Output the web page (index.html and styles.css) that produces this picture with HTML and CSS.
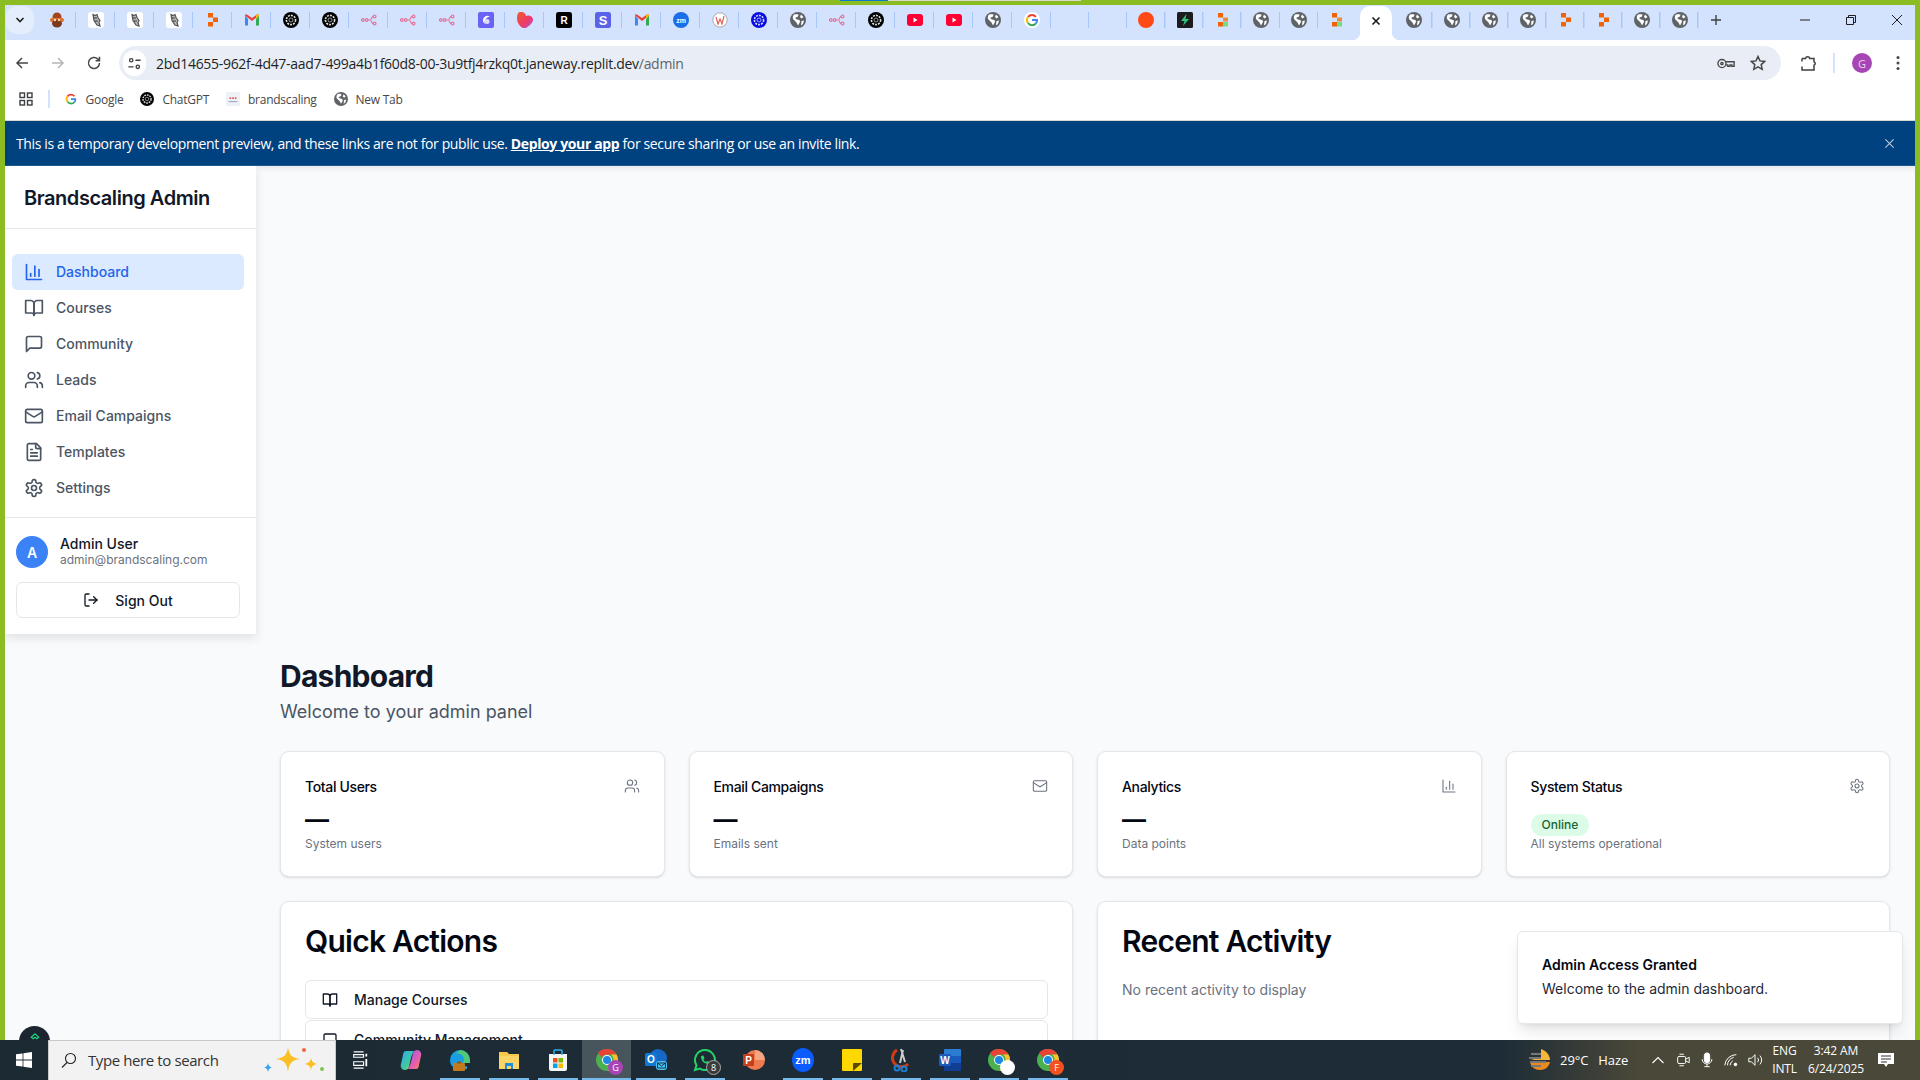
FILE: index.html
```html
<!DOCTYPE html>
<html lang="en">
<head>
  <meta charset="UTF-8">
  <title>Brandscaling Admin</title>
  <link rel="stylesheet" href="styles.css">
</head>
<body>
  <svg class="defs" aria-hidden="true">
    <!-- page icons -->
    <symbol id="i-chart" viewBox="0 0 24 24"><path d="M3 3v18h18"/><path d="M18 17V9"/><path d="M13 17V5"/><path d="M8 17v-3"/></symbol>
    <symbol id="i-book" viewBox="0 0 24 24"><path d="M2 3h6a4 4 0 0 1 4 4v14a3 3 0 0 0-3-3H2z"/><path d="M22 3h-6a4 4 0 0 0-4 4v14a3 3 0 0 1 3-3h7z"/></symbol>
    <symbol id="i-message" viewBox="0 0 24 24"><path d="M21 15a2 2 0 0 1-2 2H7l-4 4V5a2 2 0 0 1 2-2h14a2 2 0 0 1 2 2z"/></symbol>
    <symbol id="i-users" viewBox="0 0 24 24"><path d="M16 21v-2a4 4 0 0 0-4-4H6a4 4 0 0 0-4 4v2"/><circle cx="9" cy="7" r="4"/><path d="M22 21v-2a4 4 0 0 0-3-3.87"/><path d="M16 3.13a4 4 0 0 1 0 7.75"/></symbol>
    <symbol id="i-mail" viewBox="0 0 24 24"><rect width="20" height="16" x="2" y="4" rx="2"/><path d="m22 7-8.97 5.7a1.94 1.94 0 0 1-2.06 0L2 7"/></symbol>
    <symbol id="i-file" viewBox="0 0 24 24"><path d="M15 2H6a2 2 0 0 0-2 2v16a2 2 0 0 0 2 2h12a2 2 0 0 0 2-2V7Z"/><path d="M14 2v4a2 2 0 0 0 2 2h4"/><path d="M10 9H8"/><path d="M16 13H8"/><path d="M16 17H8"/></symbol>
    <symbol id="i-gear" viewBox="0 0 24 24"><path d="M12.22 2h-.44a2 2 0 0 0-2 2v.18a2 2 0 0 1-1 1.73l-.43.25a2 2 0 0 1-2 0l-.15-.08a2 2 0 0 0-2.73.73l-.22.38a2 2 0 0 0 .73 2.73l.15.1a2 2 0 0 1 1 1.72v.51a2 2 0 0 1-1 1.74l-.15.09a2 2 0 0 0-.73 2.73l.22.38a2 2 0 0 0 2.73.73l.15-.08a2 2 0 0 1 2 0l.43.25a2 2 0 0 1 1 1.73V20a2 2 0 0 0 2 2h.44a2 2 0 0 0 2-2v-.18a2 2 0 0 1 1-1.73l.43-.25a2 2 0 0 1 2 0l.15.08a2 2 0 0 0 2.73-.73l.22-.39a2 2 0 0 0-.73-2.73l-.15-.08a2 2 0 0 1-1-1.74v-.5a2 2 0 0 1 1-1.74l.15-.09a2 2 0 0 0 .73-2.73l-.22-.38a2 2 0 0 0-2.73-.73l-.15.08a2 2 0 0 1-2 0l-.43-.25a2 2 0 0 1-1-1.73V4a2 2 0 0 0-2-2z"/><circle cx="12" cy="12" r="3"/></symbol>
    <symbol id="i-logout" viewBox="0 0 24 24"><path d="M9 21H5a2 2 0 0 1-2-2V5a2 2 0 0 1 2-2h4"/><polyline points="16 17 21 12 16 7"/><line x1="21" x2="9" y1="12" y2="12"/></symbol>

    <!-- favicons -->
    <symbol id="f-monkey" viewBox="0 0 16 16"><circle cx="8" cy="5" r="4.5" fill="#a3461c"/><rect x="1" y="6" width="14" height="4" rx="2" fill="#e0702a"/><ellipse cx="8" cy="11.5" rx="5" ry="4" fill="#7a3a1c"/><circle cx="6" cy="8" r="1.2" fill="#f7d9a8"/><circle cx="10" cy="8" r="1.2" fill="#f7d9a8"/></symbol>
    <symbol id="f-coil" viewBox="0 0 16 16"><rect width="16" height="16" rx="3" fill="#fff"/><path d="M5 2.500l2 1 2-1 1 3 2 3-1 2 1 3.500-3-1-3-4.500z" fill="#bbb" stroke="#555" stroke-width="1.2"/><path d="M6 6h3M7 9h3" stroke="#333"/></symbol>
    <symbol id="f-replit" viewBox="0 0 16 16"><rect x="3" y="1" width="5" height="4.5" fill="#f26207"/><rect x="8" y="5.5" width="5" height="4.5" fill="#f26207"/><rect x="3" y="10" width="5" height="4.5" fill="#f26207"/></symbol>
    <symbol id="f-replit2" viewBox="0 0 16 16"><rect x="3" y="1" width="5" height="4.5" fill="#f26207"/><rect x="8" y="5.5" width="5" height="4" fill="#f08a3c"/><rect x="3" y="10" width="5" height="4.5" fill="#f26207"/><rect x="8" y="10" width="5" height="4.5" fill="#6fe07e"/></symbol>
    <symbol id="f-gmail" viewBox="0 0 16 16"><path d="M1 3.500v10h3V7z" fill="#4285f4"/><path d="M15 3.500v10h-3V7z" fill="#34a853"/><path d="M1 3.500 8 9l7-5.500V2.500l-2 0L8 6 3 2.500H1z" fill="#ea4335"/><path d="M12 7l3-3.500V2.500h-2L12 4z" fill="#fbbc04"/></symbol>
    <symbol id="f-openai" viewBox="0 0 16 16"><circle cx="8" cy="8" r="8" fill="#000"/><circle cx="8" cy="8" r="4.6" fill="none" stroke="#ddd" stroke-width="1.6" stroke-dasharray="2 1"/><circle cx="8" cy="8" r="2" fill="none" stroke="#999"/></symbol>
    <symbol id="f-openai-blue" viewBox="0 0 16 16"><circle cx="8" cy="8" r="8" fill="#0a0ae0"/><circle cx="8" cy="8" r="4.6" fill="none" stroke="#cfd8ff" stroke-width="1.6" stroke-dasharray="2 1"/><circle cx="8" cy="8" r="2" fill="none" stroke="#9fb0ff"/></symbol>
    <symbol id="f-nodes" viewBox="0 0 16 16"><g fill="none" stroke="#e0749c" stroke-width="1.2"><circle cx="1.8" cy="8" r="1.3"/><circle cx="5.6" cy="8" r="1.3"/><circle cx="13.6" cy="4.4" r="1.4"/><circle cx="13.6" cy="11.6" r="1.4"/><path d="M7 8h2.500M9.500 8c1 0 .8-3.600 2.800-3.600M9.500 8c1 0 .8 3.600 2.800 3.600"/></g></symbol>
    <symbol id="f-purple" viewBox="0 0 16 16"><rect width="16" height="16" rx="2" fill="#6a62f5"/><path d="M12 4.500a4.500 4.500 0 0 0-7 3.500 4 4 0 0 0 2 4c-1-3 1-7 5-7.500z" fill="#fff"/><circle cx="9" cy="9.500" r="2.500" fill="#dcdaff"/></symbol>
    <symbol id="f-heart" viewBox="0 0 16 16"><defs><linearGradient id="hg" x1="0" y1="0" x2="1" y2="1"><stop offset="0" stop-color="#f05a28"/><stop offset=".6" stop-color="#ee3a6a"/><stop offset="1" stop-color="#a05ce8"/></linearGradient></defs><path d="M3 0h2a5 5 0 0 1 4 4c1-1 7-1 7 4 0 3-4 6-7 8H6C2 14 0 10 0 6c0-3 1-6 3-6z" fill="url(#hg)"/></symbol>
    <symbol id="f-w" viewBox="0 0 16 16"><circle cx="8" cy="8" r="7.2" fill="#fff" stroke="#aaa"/><path d="M4 5l2 7 2-5 2 5 2-8" fill="none" stroke="#e05a4f" stroke-width="1.1"/></symbol>
    <symbol id="f-globe" viewBox="0 0 16 16"><circle cx="8" cy="8" r="8" fill="#5f6368"/><path d="M4 2.500c1.500-.5 3-.5 4.500 0l-.5 2-3 1.500 2 1.500 2.500.500.500 2-2 3.500-1.500-3-3.500-3.500C2.500 5 3 3.500 4 2.500zM11 2.500l2.500 2.500-2 1.500-1.500-1.500zM11.500 9l2.500-.5-1 3.500-2 1.500z" fill="#fff"/></symbol>
    <symbol id="f-yt" viewBox="0 0 16 16"><rect y="2" width="16" height="12" rx="3" fill="#ff0033"/><path d="M6.500 5.500v5l4-2.500z" fill="#fff"/></symbol>
    <symbol id="f-g" viewBox="0 0 16 16"><circle cx="8" cy="8" r="8" fill="#fff"/><g fill="none" stroke-width="2"><path d="M11.900 4.900A5 5 0 0 0 4 5" stroke="#ea4335"/><path d="M4 5a5 5 0 0 0 0 6" stroke="#fbbc04"/><path d="M4 11a5 5 0 0 0 8 0.400" stroke="#34a853"/><path d="M12 11.400A5 5 0 0 0 13 8H8" stroke="#4285f4"/></g></symbol>
    <symbol id="f-dot" viewBox="0 0 16 16"><circle cx="8" cy="8" r="8" fill="#ff4a17"/></symbol>
    <symbol id="f-bolt" viewBox="0 0 16 16"><rect width="16" height="16" rx="1.500" fill="#1c1c1c"/><path d="M9.500 2 4 9h3.500L6 14l6-7H8.500z" fill="#35c27d"/></symbol>
    <symbol id="a-chrome" viewBox="0 0 24 24"><circle cx="12" cy="12" r="11" fill="#4caf50"/><path d="M12 1a11 11 0 0 1 9.500 5.500H12a5.500 5.500 0 0 0-5 3L3 5a11 11 0 0 1 9-4z" fill="#ea4335"/><path d="M21.500 6.500A11 11 0 0 1 13 23l4-8a5.500 5.500 0 0 0-1-8.500z" fill="#fbc02d"/><circle cx="12" cy="12" r="5" fill="#fff"/><circle cx="12" cy="12" r="4" fill="#1e88e5"/></symbol>
  </svg>

  <div class="window">
    <div class="load-line"><span class="load-blue"></span><span class="load-grey"></span></div>

    <div class="tabstrip">
      <button class="tab-search"><svg viewBox="0 0 12 12" class="caret"><path d="M2.500 4 6 7.500 9.500 4"/></svg></button>
      <div class="tabs">
        <span class="tab"><svg class="fav"><use href="#f-monkey"/></svg></span>
        <span class="tab"><svg class="fav"><use href="#f-coil"/></svg></span>
        <span class="tab"><svg class="fav"><use href="#f-coil"/></svg></span>
        <span class="tab"><svg class="fav"><use href="#f-coil"/></svg></span>
        <span class="tab"><svg class="fav"><use href="#f-replit"/></svg></span>
        <span class="tab"><svg class="fav"><use href="#f-gmail"/></svg></span>
        <span class="tab"><svg class="fav"><use href="#f-openai"/></svg></span>
        <span class="tab"><svg class="fav"><use href="#f-openai"/></svg></span>
        <span class="tab"><svg class="fav"><use href="#f-nodes"/></svg></span>
        <span class="tab"><svg class="fav"><use href="#f-nodes"/></svg></span>
        <span class="tab"><svg class="fav"><use href="#f-nodes"/></svg></span>
        <span class="tab"><svg class="fav"><use href="#f-purple"/></svg></span>
        <span class="tab"><svg class="fav"><use href="#f-heart"/></svg></span>
        <span class="tab"><svg class="fav" viewBox="0 0 16 16"><rect width="16" height="16" rx="2.500" fill="#000"/><text x="8" y="12" text-anchor="middle" class="fav-letter">R</text></svg></span>
        <span class="tab"><svg class="fav" viewBox="0 0 16 16"><rect width="16" height="16" rx="2.500" fill="#5a63e8"/><text x="8" y="12.500" text-anchor="middle" class="fav-letter big">S</text></svg></span>
        <span class="tab"><svg class="fav"><use href="#f-gmail"/></svg></span>
        <span class="tab"><svg class="fav" viewBox="0 0 16 16"><circle cx="8" cy="8" r="8" fill="#1a6fe8"/><text x="8" y="10.500" text-anchor="middle" class="fav-letter small">zm</text></svg></span>
        <span class="tab"><svg class="fav"><use href="#f-w"/></svg></span>
        <span class="tab"><svg class="fav"><use href="#f-openai-blue"/></svg></span>
        <span class="tab"><svg class="fav"><use href="#f-globe"/></svg></span>
        <span class="tab"><svg class="fav"><use href="#f-nodes"/></svg></span>
        <span class="tab"><svg class="fav"><use href="#f-openai"/></svg></span>
        <span class="tab"><svg class="fav"><use href="#f-yt"/></svg></span>
        <span class="tab"><svg class="fav"><use href="#f-yt"/></svg></span>
        <span class="tab"><svg class="fav"><use href="#f-globe"/></svg></span>
        <span class="tab"><svg class="fav"><use href="#f-g"/></svg></span>
        <span class="tab"></span>
        <span class="tab"></span>
        <span class="tab"><svg class="fav"><use href="#f-dot"/></svg></span>
        <span class="tab"><svg class="fav"><use href="#f-bolt"/></svg></span>
        <span class="tab"><svg class="fav"><use href="#f-replit2"/></svg></span>
        <span class="tab"><svg class="fav"><use href="#f-globe"/></svg></span>
        <span class="tab"><svg class="fav"><use href="#f-globe"/></svg></span>
        <span class="tab no-sep"><svg class="fav"><use href="#f-replit2"/></svg></span>
        <span class="tab active"><svg viewBox="0 0 12 12" class="tab-close"><path d="M2.500 2.500l7 7M9.500 2.500l-7 7"/></svg></span>
        <span class="tab"><svg class="fav"><use href="#f-globe"/></svg></span>
        <span class="tab"><svg class="fav"><use href="#f-globe"/></svg></span>
        <span class="tab"><svg class="fav"><use href="#f-globe"/></svg></span>
        <span class="tab"><svg class="fav"><use href="#f-globe"/></svg></span>
        <span class="tab"><svg class="fav"><use href="#f-replit"/></svg></span>
        <span class="tab"><svg class="fav"><use href="#f-replit"/></svg></span>
        <span class="tab"><svg class="fav"><use href="#f-globe"/></svg></span>
        <span class="tab"><svg class="fav"><use href="#f-globe"/></svg></span>
      </div>
      <svg viewBox="0 0 12 12" class="new-tab"><path d="M6 1v10M1 6h10"/></svg>
      <div class="win-controls">
        <svg viewBox="0 0 12 12" class="win-btn"><path d="M1 6h10"/></svg>
        <svg viewBox="0 0 12 12" class="win-btn"><path d="M1.500 3.500h7v7h-7zM3.500 3.500v-2h7v7h-2"/></svg>
        <svg viewBox="0 0 12 12" class="win-btn"><path d="M1 1l10 10M11 1 1 11"/></svg>
      </div>
    </div>

    <div class="toolbar">
      <svg viewBox="0 0 16 16" class="nav-arrow"><path d="M14 8H3M8 3 3 8l5 5"/></svg>
      <svg viewBox="0 0 16 16" class="nav-arrow off"><path d="M2 8h11M8 3l5 5-5 5"/></svg>
      <svg viewBox="0 0 16 16" class="nav-arrow"><path d="M13.500 8a5.500 5.500 0 1 1-1.600-3.900L13.500 5.700M13.500 1.800v3.900H9.600"/></svg>
      <div class="omnibox">
        <span class="site-chip"><svg viewBox="0 0 16 16"><circle cx="4.500" cy="4.500" r="1.800"/><path d="M9 4.500h5.500M1.500 11.500H7"/><circle cx="11.500" cy="11.500" r="1.800"/></svg></span>
        <span class="url">2bd14655-962f-4d47-aad7-499a4b1f60d8-00-3u9tfj4rzkq0t.janeway.replit.dev<span class="url-path">/admin</span></span>
        <svg viewBox="0 0 20 12" class="key"><circle cx="5.500" cy="6" r="4.500"/><circle cx="5.500" cy="6" r="1.300"/><path d="M10 4h9v5h-2.500V7.500h-2V9H12V7.500h-2"/></svg>
        <svg viewBox="0 0 16 16" class="star"><path d="M8 1.500l2 4.400 4.800.5-3.600 3.200 1 4.700L8 11.900l-4.200 2.400 1-4.700L1.200 6.400 6 5.900z"/></svg>
      </div>
      <svg viewBox="0 0 18 18" class="ext"><path d="M3 4.500h3.500a2.200 2.200 0 0 1 4.300 0H15v3.300a1.800 1.800 0 0 1 0 3.400V16H3v-3.500"/><path d="M3 4.500v3"/></svg>
      <span class="tool-sep"></span>
      <span class="profile">G</span>
      <svg viewBox="0 0 4 16" class="kebab"><circle cx="2" cy="2.500" r="1.500"/><circle cx="2" cy="8" r="1.500"/><circle cx="2" cy="13.500" r="1.500"/></svg>
    </div>

    <div class="bookmarks">
      <svg viewBox="0 0 14 14" class="apps"><rect x="1" y="1" width="4.500" height="4.500"/><rect x="8.500" y="1" width="4.500" height="4.500"/><rect x="1" y="8.500" width="4.500" height="4.500"/><rect x="8.500" y="8.500" width="4.500" height="4.500"/></svg>
      <span class="bm-sep"></span>
      <span class="bm"><svg class="fav-sm"><use href="#f-g"/></svg>Google</span>
      <span class="bm"><svg class="fav-sm"><use href="#f-openai"/></svg>ChatGPT</span>
      <span class="bm"><svg viewBox="0 0 16 16" class="fav-sm"><rect width="16" height="16" fill="#eef1f5"/><path d="M4 7h8" stroke="#c33" stroke-width="1.500" stroke-dasharray="2 1"/><path d="M3 11h10" stroke="#8a8fb0"/></svg>brandscaling</span>
      <span class="bm"><svg class="fav-sm"><use href="#f-globe"/></svg>New Tab</span>
    </div>

    <div class="dev-banner">
      <p>This is a temporary development preview, and these links are not for public use. <a href="#">Deploy your app</a> for secure sharing or use an invite link.</p>
      <svg viewBox="0 0 12 12" class="banner-close"><path d="M1.500 1.500l9 9M10.500 1.500l-9 9"/></svg>
    </div>

    <div class="app">
      <aside class="sidebar">
        <h2 class="brand">Brandscaling Admin</h2>
        <nav class="side-nav">
          <a class="nav-item current" href="#"><svg class="icon"><use href="#i-chart"/></svg>Dashboard</a>
          <a class="nav-item" href="#"><svg class="icon"><use href="#i-book"/></svg>Courses</a>
          <a class="nav-item" href="#"><svg class="icon"><use href="#i-message"/></svg>Community</a>
          <a class="nav-item" href="#"><svg class="icon"><use href="#i-users"/></svg>Leads</a>
          <a class="nav-item" href="#"><svg class="icon"><use href="#i-mail"/></svg>Email Campaigns</a>
          <a class="nav-item" href="#"><svg class="icon"><use href="#i-file"/></svg>Templates</a>
          <a class="nav-item" href="#"><svg class="icon"><use href="#i-gear"/></svg>Settings</a>
        </nav>
        <div class="side-user">
          <div class="user-row">
            <span class="avatar">A</span>
            <div>
              <div class="user-name">Admin User</div>
              <div class="user-mail">admin@brandscaling.com</div>
            </div>
          </div>
          <button class="sign-out"><svg class="icon small"><use href="#i-logout"/></svg>Sign Out</button>
        </div>
      </aside>

      <main class="main">
        <h1>Dashboard</h1>
        <p class="lead">Welcome to your admin panel</p>

        <section class="stats">
          <div class="card stat">
            <div class="stat-head"><span>Total Users</span><svg class="icon tiny"><use href="#i-users"/></svg></div>
            <div class="stat-value">—</div>
            <div class="stat-note">System users</div>
          </div>
          <div class="card stat">
            <div class="stat-head"><span>Email Campaigns</span><svg class="icon tiny"><use href="#i-mail"/></svg></div>
            <div class="stat-value">—</div>
            <div class="stat-note">Emails sent</div>
          </div>
          <div class="card stat">
            <div class="stat-head"><span>Analytics</span><svg class="icon tiny"><use href="#i-chart"/></svg></div>
            <div class="stat-value">—</div>
            <div class="stat-note">Data points</div>
          </div>
          <div class="card stat">
            <div class="stat-head"><span>System Status</span><svg class="icon tiny"><use href="#i-gear"/></svg></div>
            <div class="stat-value"><span class="badge">Online</span></div>
            <div class="stat-note">All systems operational</div>
          </div>
        </section>

        <section class="panels">
          <div class="card panel">
            <h2>Quick Actions</h2>
            <button class="action"><svg class="icon small"><use href="#i-book"/></svg>Manage Courses</button>
            <button class="action"><svg class="icon small"><use href="#i-message"/></svg>Community Management</button>
          </div>
          <div class="card panel">
            <h2>Recent Activity</h2>
            <p class="empty">No recent activity to display</p>
          </div>
        </section>
      </main>

      <div class="toast">
        <div class="toast-title">Admin Access Granted</div>
        <div class="toast-text">Welcome to the admin dashboard.</div>
      </div>
      <span class="replit-badge"><svg viewBox="0 0 16 16"><path d="M8 2.500 13 7l-2.500 2L8 7 5.500 9 3 7z"/></svg></span>
    </div>
  </div>

  <footer class="taskbar">
    <svg viewBox="0 0 16 16" class="start"><path d="M0 2.300 6.600 1.400V7.600H0zM7.400 1.300 16 0V7.600H7.400zM0 8.400H6.600V14.600L0 13.700zM7.400 8.400H16V16L7.400 14.700z"/></svg>
    <div class="search-box">
      <svg viewBox="0 0 16 16" class="search-glass"><circle cx="9.500" cy="6.500" r="5"/><path d="M6 10.500 1 15.500"/></svg>
      <span>Type here to search</span>
      <svg viewBox="0 0 64 32" class="sparkles">
        <path d="M26 3c1 8 4 11 12 12-8 1-11 4-12 13-1-9-4-12-12-13 8-1 11-4 12-12z" fill="#fbbf24"/>
        <path d="M49 14c.5 3 2 5 6 6-4 1-5.500 2.500-6 6-.5-3.500-2-5-6-6 4-1 5.500-3 6-6z" fill="#fbbf24"/>
        <path d="M6 19c.5 2.500 1.500 4 4 4.500-2.500.5-3.500 2-4 4.500-.5-2.500-1.500-4-4-4.500 2.500-.5 3.500-2 4-4.500z" fill="#38a5f0"/>
        <circle cx="42" cy="6" r="2" fill="#f0673a"/><circle cx="60" cy="25" r="2" fill="#7ac74f"/>
      </svg>
    </div>
    <svg viewBox="0 0 20 20" class="task-view"><path d="M3 4h11v3H3zM3 4v0M3 12h11v4H3zM3 1h11M3 19h11"/><path d="M17 3v3M17 9v8" stroke-width="2"/></svg>

    <div class="task-apps">
      <span class="task-app"><svg viewBox="0 0 24 24"><defs><linearGradient id="cp" x1="0" y1="0" x2="1" y2="1"><stop offset="0" stop-color="#2ea8f0"/><stop offset=".6" stop-color="#3fc9a0"/><stop offset="1" stop-color="#f0c93a"/></linearGradient><linearGradient id="cp2" x1="0" y1="0" x2="1" y2="1"><stop offset="0" stop-color="#8a5cf0"/><stop offset=".6" stop-color="#e85fae"/><stop offset="1" stop-color="#f2864a"/></linearGradient></defs><path d="M7 3h8c-3 4-4 12-5 16-1 2-2 3-4 3-3 0-5-3-4-6l2-9c0-2 1-4 3-4z" fill="url(#cp)"/><path d="M17 21H9c3-4 4-12 5-16 1-2 2-3 4-3 3 0 5 3 4 6l-2 9c0 2-1 4-3 4z" fill="url(#cp2)"/></svg></span>
      <span class="task-app on"><svg viewBox="0 0 24 24"><path d="M2 12a10 10 0 0 1 20 0v3H8c0 3 4 5 11 3v3c-8 2-17 0-17-9z" fill="#1b9de2"/><path d="M12 2a10 10 0 0 1 10 10v3h-7c3-6-2-11-8-9z" fill="#50c878"/><rect x="5" y="15" width="12" height="8" rx="1" fill="#c27a1c"/><rect x="9" y="13.500" width="4" height="2" fill="#8a5a12"/></svg></span>
      <span class="task-app on"><svg viewBox="0 0 24 24"><path d="M2 4h8l2 2h10v15H2z" fill="#f7c948"/><path d="M2 8h20v13H2z" fill="#fbd667"/><path d="M8 21v-6h8v6h-2v-3h-4v3z" fill="#1f8fdc"/></svg></span>
      <span class="task-app on"><svg viewBox="0 0 24 24"><path d="M3 6h18v15a2 2 0 0 1-2 2H5a2 2 0 0 1-2-2z" fill="#f5f5f5"/><path d="M8 7V3a1 1 0 0 1 1-1h6a1 1 0 0 1 1 1v4" fill="none" stroke="#2ab4f0" stroke-width="1.500"/><rect x="7" y="10" width="4.500" height="4.500" fill="#f25022"/><rect x="12.500" y="10" width="4.500" height="4.500" fill="#7fba00"/><rect x="7" y="15.500" width="4.500" height="4.500" fill="#00a4ef"/><rect x="12.500" y="15.500" width="4.500" height="4.500" fill="#ffb900"/></svg></span>
      <span class="task-app on current"><svg><use href="#a-chrome"/></svg><span class="app-badge purple">G</span></span>
      <span class="task-app on"><svg viewBox="0 0 24 24"><circle cx="14" cy="10" r="9" fill="#1668c7"/><rect x="1" y="5" width="12" height="13" rx="1.500" fill="#0f78d4"/><text x="7" y="15" text-anchor="middle" class="app-letter">O</text><rect x="12" y="13" width="11" height="9" rx="3" fill="#49c5f5"/><path d="M13.500 15h8v5h-8zM13.500 15l4 3 4-3" fill="none" stroke="#123" stroke-width=".9"/></svg></span>
      <span class="task-app on"><svg viewBox="0 0 24 24"><path d="M12 2a10 10 0 0 0-8.500 15.300L2 22l4.800-1.400A10 10 0 1 0 12 2z" fill="none" stroke="#25d366" stroke-width="2"/><path d="M8 8c0 5 3 8 8 8l1-2-3-1-1 1c-1-.5-2-1.500-2.500-2.500l1-1-1-3z" fill="#25d366"/></svg><span class="app-badge count">8</span></span>
      <span class="task-app"><svg viewBox="0 0 24 24"><circle cx="13" cy="12" r="10" fill="#ee7a4f"/><path d="M13 2a10 10 0 0 1 10 10H13z" fill="#f5a583"/><rect x="1" y="6" width="11" height="12" rx="1" fill="#c43e1c"/><text x="6.500" y="15.500" text-anchor="middle" class="app-letter">P</text></svg></span>
      <span class="task-app on"><svg viewBox="0 0 24 24"><ellipse cx="12" cy="12" rx="11" ry="12" fill="#0b5cff"/><text x="12" y="16" text-anchor="middle" class="app-letter zm">zm</text></svg></span>
      <span class="task-app on split"><svg viewBox="0 0 24 24"><rect x="2" y="1" width="20" height="22" rx="1" fill="#ffd800"/><path d="M13 23v-7a1 1 0 0 1 1-1h8z" fill="#5a4a00"/></svg></span>
      <span class="task-app on"><svg viewBox="0 0 24 24"><path d="M8 2a9 9 0 1 0 11 14" fill="none" stroke="#d03a14" stroke-width="3"/><path d="M14 2 11 15M12 1l4 13" stroke="#ccc" stroke-width="2"/><circle cx="8" cy="20" r="2.500" fill="none" stroke="#1b7fd4" stroke-width="2"/><circle cx="15" cy="21" r="2.500" fill="none" stroke="#1b7fd4" stroke-width="2"/></svg></span>
      <span class="task-app on split"><svg viewBox="0 0 24 24"><rect x="6" y="1" width="17" height="22" rx="1" fill="#2b7cd3"/><rect x="6" y="8" width="17" height="7" fill="#185abd"/><rect x="6" y="15" width="17" height="8" fill="#103f91"/><rect x="1" y="6" width="12" height="12" rx="1" fill="#185abd"/><text x="7" y="15.500" text-anchor="middle" class="app-letter">W</text></svg></span>
      <span class="task-app on"><svg><use href="#a-chrome"/></svg><span class="app-badge white"></span></span>
      <span class="task-app on"><svg><use href="#a-chrome"/></svg><span class="app-badge red">F</span></span>
    </div>

    <div class="tray">
      <svg viewBox="0 0 24 24" class="weather"><path d="M13 1c6 2 9 7 9 11H3l10-3z" fill="#f4b73c"/><path d="M2 14h20c-1 5-5 8-10 8S3 19 2 14z" fill="#ee8a1d"/><path d="M3 6h10M1 10h12M2 14h16M3 18h10" stroke="#777" stroke-width="2"/></svg>
      <span class="temp">29°C</span>
      <span class="haze">Haze</span>
      <svg viewBox="0 0 14 14" class="tray-icon chevron"><path d="M1.500 10 7 4.500 12.500 10"/></svg>
      <svg viewBox="0 0 18 18" class="tray-icon"><rect x="3" y="5" width="9" height="8" rx="1.500"/><path d="M12 8l4-2v6l-4-2M5 2.500h5M5 15.500h5"/></svg>
      <svg viewBox="0 0 18 18" class="tray-icon"><rect x="6" y="1" width="6" height="11" rx="3" fill="#fff"/><path d="M3.500 8a5.500 5.500 0 0 0 11 0M9 13.500V16M6 16.500h6"/></svg>
      <svg viewBox="0 0 18 18" class="tray-icon"><path d="M2 15a13 13 0 0 1 13-12M5 15a10 10 0 0 1 7-9M8 15a6 6 0 0 1 3-5"/><circle cx="14" cy="14" r="1.500" fill="#fff"/></svg>
      <svg viewBox="0 0 18 18" class="tray-icon"><path d="M2 7v4h3l4 4V3L5 7zM12 6.500a4 4 0 0 1 0 5M14.500 4a8 8 0 0 1 0 10"/></svg>
      <div class="lang"><span>ENG</span><span>INTL</span></div>
      <div class="clock"><span>3:42 AM</span><span>6/24/2025</span></div>
      <svg viewBox="0 0 18 18" class="notify"><path d="M1 2h16v11H11l-2 3-2-3H1z" fill="#fff"/><path d="M4 5h10M4 8h10M4 11h6" stroke="#333"/></svg>
    </div>
  </footer>
</body>
</html>
```

FILE: styles.css
```css
* {
  box-sizing: border-box;
}
html, body {
  margin: 0;
  height: 1080px;
  overflow: hidden;
}
body {
  font-family: Inter, "Liberation Sans", sans-serif;
  color: #111827;
  display: flex;
  flex-direction: column;
}
button {
  font-family: inherit;
}
.defs {
  width: 0;
  height: 0;
  display: block;
}
.fav-letter {
  font: 700 10px "Liberation Sans", sans-serif;
  fill: #fff;
}
.fav-letter.big {
  font-size: 13px;
}
.fav-letter.small {
  font-size: 7px;
}
.app-letter {
  font: 700 10px "Liberation Sans", sans-serif;
  fill: #fff;
}
.app-letter.zm {
  font-size: 11px;
}

/* browser frame */
.window {
  height: 1040px;
  display: flex;
  flex-direction: column;
  background: #8bbd22;
  padding: 0 5px;
}
.load-line {
  height: 5px;
  display: flex;
  align-items: flex-start;
  padding-left: 835px;
  flex: none;
}
.load-blue {
  width: 48px;
  height: 1px;
  background: #0b79c9;
}
.load-grey {
  width: 193px;
  height: 1px;
  background: #d5d9c5;
}
.tabstrip {
  height: 35px;
  flex: none;
  background: #d3e3fd;
  display: flex;
  align-items: stretch;
}
.tab-search {
  width: 28px;
  height: 28px;
  margin: 1px 3px 0 1px;
  border: 0;
  padding: 0;
  border-radius: 10px;
  background: #e4edfc;
  display: flex;
  align-items: center;
  justify-content: center;
}
.caret {
  width: 12px;
  height: 12px;
  fill: none;
  stroke: #1f1f1f;
  stroke-width: 1.6;
}
.tabs {
  display: flex;
}
.tab {
  width: 39px;
  height: 30px;
  display: flex;
  align-items: center;
  justify-content: center;
  background: linear-gradient(#a8c7fa, #a8c7fa) right center / 1.5px 16px no-repeat;
}
.tab:nth-child(n+27) {
  width: 38.2px;
}
.tab.active ~ .tab {
  width: 38px;
}
.tab.no-sep {
  background: none;
}
.tab.active {
  position: relative;
  height: 34px;
  margin-top: 1px;
  padding-bottom: 4px;
  background: #fff;
  border-radius: 10px 10px 0 0;
  width: 32px;
  margin-left: 3px;
  margin-right: 3px;
}
.tab.active::before,
.tab.active::after {
  content: "";
  position: absolute;
  bottom: 0;
  width: 8px;
  height: 8px;
}
.tab.active::before {
  left: -8px;
  background: radial-gradient(circle at 0 0, #d3e3fd 8px, #fff 8.5px);
}
.tab.active::after {
  right: -8px;
  background: radial-gradient(circle at 100% 0, #d3e3fd 8px, #fff 8.5px);
}
.fav {
  width: 16px;
  height: 16px;
}
.tab-close {
  width: 12px;
  height: 12px;
  fill: none;
  stroke: #1f1f1f;
  stroke-width: 1.7;
}
.new-tab {
  width: 12px;
  height: 12px;
  margin: 9px 0 0 11px;
  fill: none;
  stroke: #3c4043;
  stroke-width: 1.4;
}
.win-controls {
  margin-left: auto;
  display: flex;
  gap: 34px;
  padding: 9px 12px 0 0;
}
.win-btn {
  width: 12px;
  height: 12px;
  fill: none;
  stroke: #1f1f1f;
  stroke-width: 1;
}
.toolbar {
  height: 43px;
  flex: none;
  background: #fff;
  display: flex;
  align-items: center;
  padding: 3px 15px 0 9px;
}
.nav-arrow {
  width: 16px;
  height: 16px;
  margin-right: 20px;
  fill: none;
  stroke: #474747;
  stroke-width: 1.5;
}
.nav-arrow.off {
  stroke: #b4b6b8;
}
.omnibox {
  width: 1662px;
  height: 34px;
  margin-left: -3px;
  flex: none;
  background: #e9eef6;
  border-radius: 17px;
  display: flex;
  align-items: center;
  padding: 0 15px 0 4px;
}
.site-chip {
  width: 23px;
  height: 26px;
  border-radius: 13px;
  background: #fff;
  display: flex;
  align-items: center;
  justify-content: center;
}
.site-chip svg {
  width: 15px;
  height: 15px;
  fill: none;
  stroke: #3c4043;
  stroke-width: 1.4;
}
.url {
  margin-left: 10px;
  font: 14px "Open Sans", sans-serif;
  color: #1f1f1f;
  letter-spacing: -0.3px;
  flex: 1;
  white-space: nowrap;
}
.url-path {
  color: #5f6368;
}
.key {
  width: 18px;
  height: 11px;
  fill: none;
  stroke: #474747;
  stroke-width: 1.5;
}
.star {
  width: 16px;
  height: 16px;
  margin-left: 15px;
  fill: none;
  stroke: #474747;
  stroke-width: 1.5;
}
.ext {
  width: 18px;
  height: 18px;
  margin-left: 18px;
  fill: none;
  stroke: #3c4043;
  stroke-width: 1.5;
}
.tool-sep {
  width: 2px;
  height: 20px;
  margin-left: 16px;
  background: #d3e3fd;
}
.profile {
  width: 20px;
  height: 20px;
  margin-left: 17px;
  border-radius: 50%;
  background: #a745b5;
  color: #e9d6ee;
  font: 11px "Open Sans", sans-serif;
  display: flex;
  align-items: center;
  justify-content: center;
}
.kebab {
  width: 4px;
  height: 16px;
  margin-left: 24px;
  fill: #474747;
}
.bookmarks {
  height: 38px;
  flex: none;
  background: #fff;
  border-bottom: 1px solid #d9d9d4;
  display: flex;
  align-items: center;
  padding: 0 0 5px 14px;
  font: 12px "Open Sans", sans-serif;
  letter-spacing: -0.26px;
  color: #474747;
}
.apps {
  width: 14px;
  height: 14px;
  fill: none;
  stroke: #3c4043;
  stroke-width: 1.4;
}
.bm-sep {
  width: 1.5px;
  height: 18px;
  margin: 0 14px 0 15px;
  background: #d3e3fd;
}
.bm {
  display: flex;
  align-items: center;
  gap: 8px;
  margin-right: 17px;
}
.fav-sm {
  width: 14px;
  height: 14px;
}
.dev-banner {
  height: 45px;
  flex: none;
  background: #00417f;
  border-bottom: 1px solid #1d5a8f;
  color: #fff;
  display: flex;
  align-items: center;
  justify-content: space-between;
  padding: 0 20px 0 11px;
  font: 14px "Open Sans", sans-serif;
  letter-spacing: -0.37px;
}
.dev-banner p {
  margin: 0;
}
.dev-banner a {
  color: #fff;
  font-weight: 700;
}
.banner-close {
  width: 11px;
  height: 11px;
  fill: none;
  stroke: #b9c9dc;
  stroke-width: 1.2;
}

/* admin app */
.app {
  flex: 1;
  min-height: 0;
  position: relative;
  display: flex;
  align-items: flex-start;
  background: #f9fafb;
  overflow: hidden;
  box-shadow: inset 0 6px 6px -4px rgba(0, 0, 0, 0.08);
}
.sidebar {
  width: 251px;
  flex: none;
  background: #fff;
  box-shadow: 0 4px 10px rgba(0, 0, 0, 0.1);
}
.brand {
  margin: 0;
  height: 63px;
  padding: 18px 19px 0;
  font-size: 20px;
  line-height: 28px;
  font-weight: 600;
  letter-spacing: -0.45px;
  color: #111827;
  border-bottom: 1px solid #e5e7eb;
}
.side-nav {
  padding: 25px 12px 11px 7px;
  display: flex;
  flex-direction: column;
}
.nav-item {
  height: 36px;
  padding: 0 12px 1px;
  display: flex;
  align-items: center;
  gap: 12px;
  border-radius: 6px;
  font-size: 14px;
  font-weight: 500;
  color: #4b5563;
  text-decoration: none;
}
.nav-item.current {
  background: #dbeafe;
  color: #2563eb;
}
.icon {
  width: 20px;
  height: 20px;
  flex: none;
  fill: none;
  stroke: currentColor;
  stroke-width: 2;
  stroke-linecap: round;
  stroke-linejoin: round;
}
.icon.small {
  width: 16px;
  height: 16px;
}
.icon.tiny {
  width: 16px;
  height: 16px;
  color: #6b7280;
  stroke-width: 1.6;
}
.side-user {
  border-top: 1px solid #e5e7eb;
  padding: 18px 11px 16px;
}
.user-row {
  display: flex;
  align-items: center;
  gap: 12px;
  margin-bottom: 14px;
}
.avatar {
  width: 32px;
  height: 32px;
  flex: none;
  border-radius: 50%;
  background: #3b82f6;
  color: #fff;
  font-size: 14px;
  font-weight: 600;
  display: flex;
  align-items: center;
  justify-content: center;
}
.user-name {
  font-size: 14px;
  line-height: 16px;
  font-weight: 500;
  color: #111827;
}
.user-mail {
  font-size: 12px;
  line-height: 16px;
  color: #6b7280;
}
.sign-out {
  width: 224px;
  height: 36px;
  border: 1px solid #e5e7eb;
  border-radius: 6px;
  background: #fff;
  color: #111827;
  font-size: 14px;
  font-weight: 500;
  display: flex;
  align-items: center;
  justify-content: center;
  gap: 16px;
}
.main {
  flex: 1;
  padding: 492px 25px 0 24px;
}
h1 {
  margin: 0 0 4px;
  font-size: 30px;
  line-height: 36px;
  font-weight: 700;
  letter-spacing: -0.75px;
  color: #111827;
}
.lead {
  margin: 0 0 25px;
  font-size: 18px;
  line-height: 28px;
  color: #4b5563;
}
.stats {
  display: grid;
  grid-template-columns: repeat(4, 1fr);
  gap: 24px;
  margin-bottom: 24px;
}
.card {
  background: #fff;
  border: 1px solid #e5e7eb;
  border-radius: 9px;
  box-shadow: 0 1px 3px rgba(0, 0, 0, 0.1), 0 1px 2px -1px rgba(0, 0, 0, 0.1);
}
.stat {
  height: 126px;
  padding: 24px;
}
.stat-head {
  display: flex;
  justify-content: space-between;
  align-items: center;
  height: 20px;
  margin-bottom: 8px;
  font-size: 14px;
  font-weight: 500;
  letter-spacing: -0.35px;
  color: #030712;
}
.stat-value {
  height: 32px;
  display: flex;
  align-items: flex-end;
  font-size: 24px;
  line-height: 32px;
  font-weight: 700;
  color: #030712;
}
.badge {
  height: 22px;
  padding: 0 11px;
  border-radius: 11px;
  background: #dcfce7;
  color: #166534;
  font-size: 12px;
  line-height: 22px;
  font-weight: 500;
}
.stat-note {
  font-size: 12px;
  line-height: 16px;
  color: #6b7280;
}
.panels {
  display: grid;
  grid-template-columns: 1fr 1fr;
  gap: 24px;
}
.panel {
  height: 400px;
  padding: 21px 24px;
}
.panel h2 {
  margin: 0 0 21px;
  font-size: 30px;
  line-height: 36px;
  font-weight: 600;
  letter-spacing: -0.75px;
  color: #030712;
}
.action {
  width: 100%;
  height: 39px;
  margin-bottom: 1px;
  padding: 0 16px;
  border: 1px solid #e5e7eb;
  border-radius: 6px;
  background: #fff;
  color: #111827;
  font-size: 14px;
  font-weight: 500;
  display: flex;
  align-items: center;
  gap: 16px;
}
.empty {
  margin: 0;
  font-size: 14px;
  line-height: 20px;
  color: #6b7280;
}
.toast {
  position: absolute;
  top: 765px;
  left: 1512px;
  width: 386px;
  height: 93px;
  padding: 23px 24px;
  background: #fff;
  border: 1px solid #e5e7eb;
  border-radius: 6px;
  box-shadow: 0 10px 15px -3px rgba(0, 0, 0, 0.1), 0 4px 6px -4px rgba(0, 0, 0, 0.1);
}
.toast-title {
  font-size: 14px;
  line-height: 20px;
  font-weight: 600;
  color: #030712;
}
.toast-text {
  margin-top: 4px;
  font-size: 14px;
  line-height: 20px;
  color: #1f2937;
}
.replit-badge {
  position: absolute;
  top: 860px;
  left: 14px;
  width: 31px;
  height: 31px;
  border-radius: 50%;
  background: #1c2530;
  display: flex;
  justify-content: center;
  padding-top: 6px;
}
.replit-badge svg {
  width: 12px;
  height: 12px;
  fill: none;
  stroke: #1fd67c;
  stroke-width: 1.6;
}

/* windows taskbar */
.taskbar {
  height: 40px;
  flex: none;
  background: linear-gradient(90deg, #1b2a33 0, #1d2c36 1500px, #4a4839 1640px, #4a4839 100%);
  display: flex;
  align-items: center;
  color: #fff;
  position: relative;
}
.start {
  width: 16px;
  height: 16px;
  margin: 0 16px;
  fill: #fff;
  flex: none;
}
.search-box {
  width: 288px;
  height: 40px;
  flex: none;
  background: #f2f2f2;
  border: 1px solid #c9c9c9;
  border-bottom: 0;
  color: #333;
  display: flex;
  align-items: center;
  font: 15px "Open Sans", sans-serif;
  letter-spacing: -0.4px;
  padding: 0 9px 1px 12px;
}
.search-glass {
  width: 16px;
  height: 16px;
  margin-right: 11px;
  fill: none;
  stroke: #222;
  stroke-width: 1.1;
}
.sparkles {
  width: 64px;
  height: 32px;
  margin-left: auto;
}
.task-view {
  width: 18px;
  height: 20px;
  margin-left: 15px;
  flex: none;
  fill: none;
  stroke: #fff;
  stroke-width: 1.2;
}
.task-apps {
  display: flex;
  margin-left: 17px;
}
.task-app {
  width: 49px;
  height: 40px;
  position: relative;
  display: flex;
  align-items: center;
  justify-content: center;
}
.task-app svg {
  width: 24px;
  height: 24px;
}
.task-app.on {
  background: linear-gradient(#76b9ed, #76b9ed) center bottom / 40px 2px no-repeat;
}
.task-app.current {
  background: linear-gradient(#76b9ed, #76b9ed) center bottom / 100% 2px no-repeat, rgba(255, 255, 255, 0.2);
}
.app-badge {
  position: absolute;
  right: 8px;
  bottom: 5px;
  width: 15px;
  height: 15px;
  border-radius: 50%;
  color: #fff;
  font: 9px "Open Sans", sans-serif;
  display: flex;
  align-items: center;
  justify-content: center;
}
.app-badge.purple {
  background: #a745b5;
}
.app-badge.count {
  background: #3a3a3a;
  border: 1px solid #aaa;
}
.app-badge.white {
  background: #fff;
}
.app-badge.red {
  background: #f4511e;
}
.tray {
  margin-left: auto;
  display: flex;
  align-items: center;
  font: 13px "Open Sans", sans-serif;
  letter-spacing: -0.1px;
  padding-right: 25px;
}
.weather {
  width: 24px;
  height: 24px;
  margin-right: 8px;
}
.temp {
  margin-right: 10px;
}
.haze {
  margin-right: 23px;
}
.tray-icon {
  width: 16px;
  height: 16px;
  margin-right: 8px;
  fill: none;
  stroke: #fff;
  stroke-width: 1.1;
}
.chevron {
  width: 14px;
  height: 14px;
  margin-right: 10px;
}
.lang,
.clock {
  display: flex;
  flex-direction: column;
  align-items: center;
  font-size: 12px;
  line-height: 18px;
}
.lang {
  margin: 0 4px 0 1px;
}
.clock {
  width: 70px;
  margin-right: 6px;
}
.notify {
  width: 18px;
  height: 18px;
}
```
